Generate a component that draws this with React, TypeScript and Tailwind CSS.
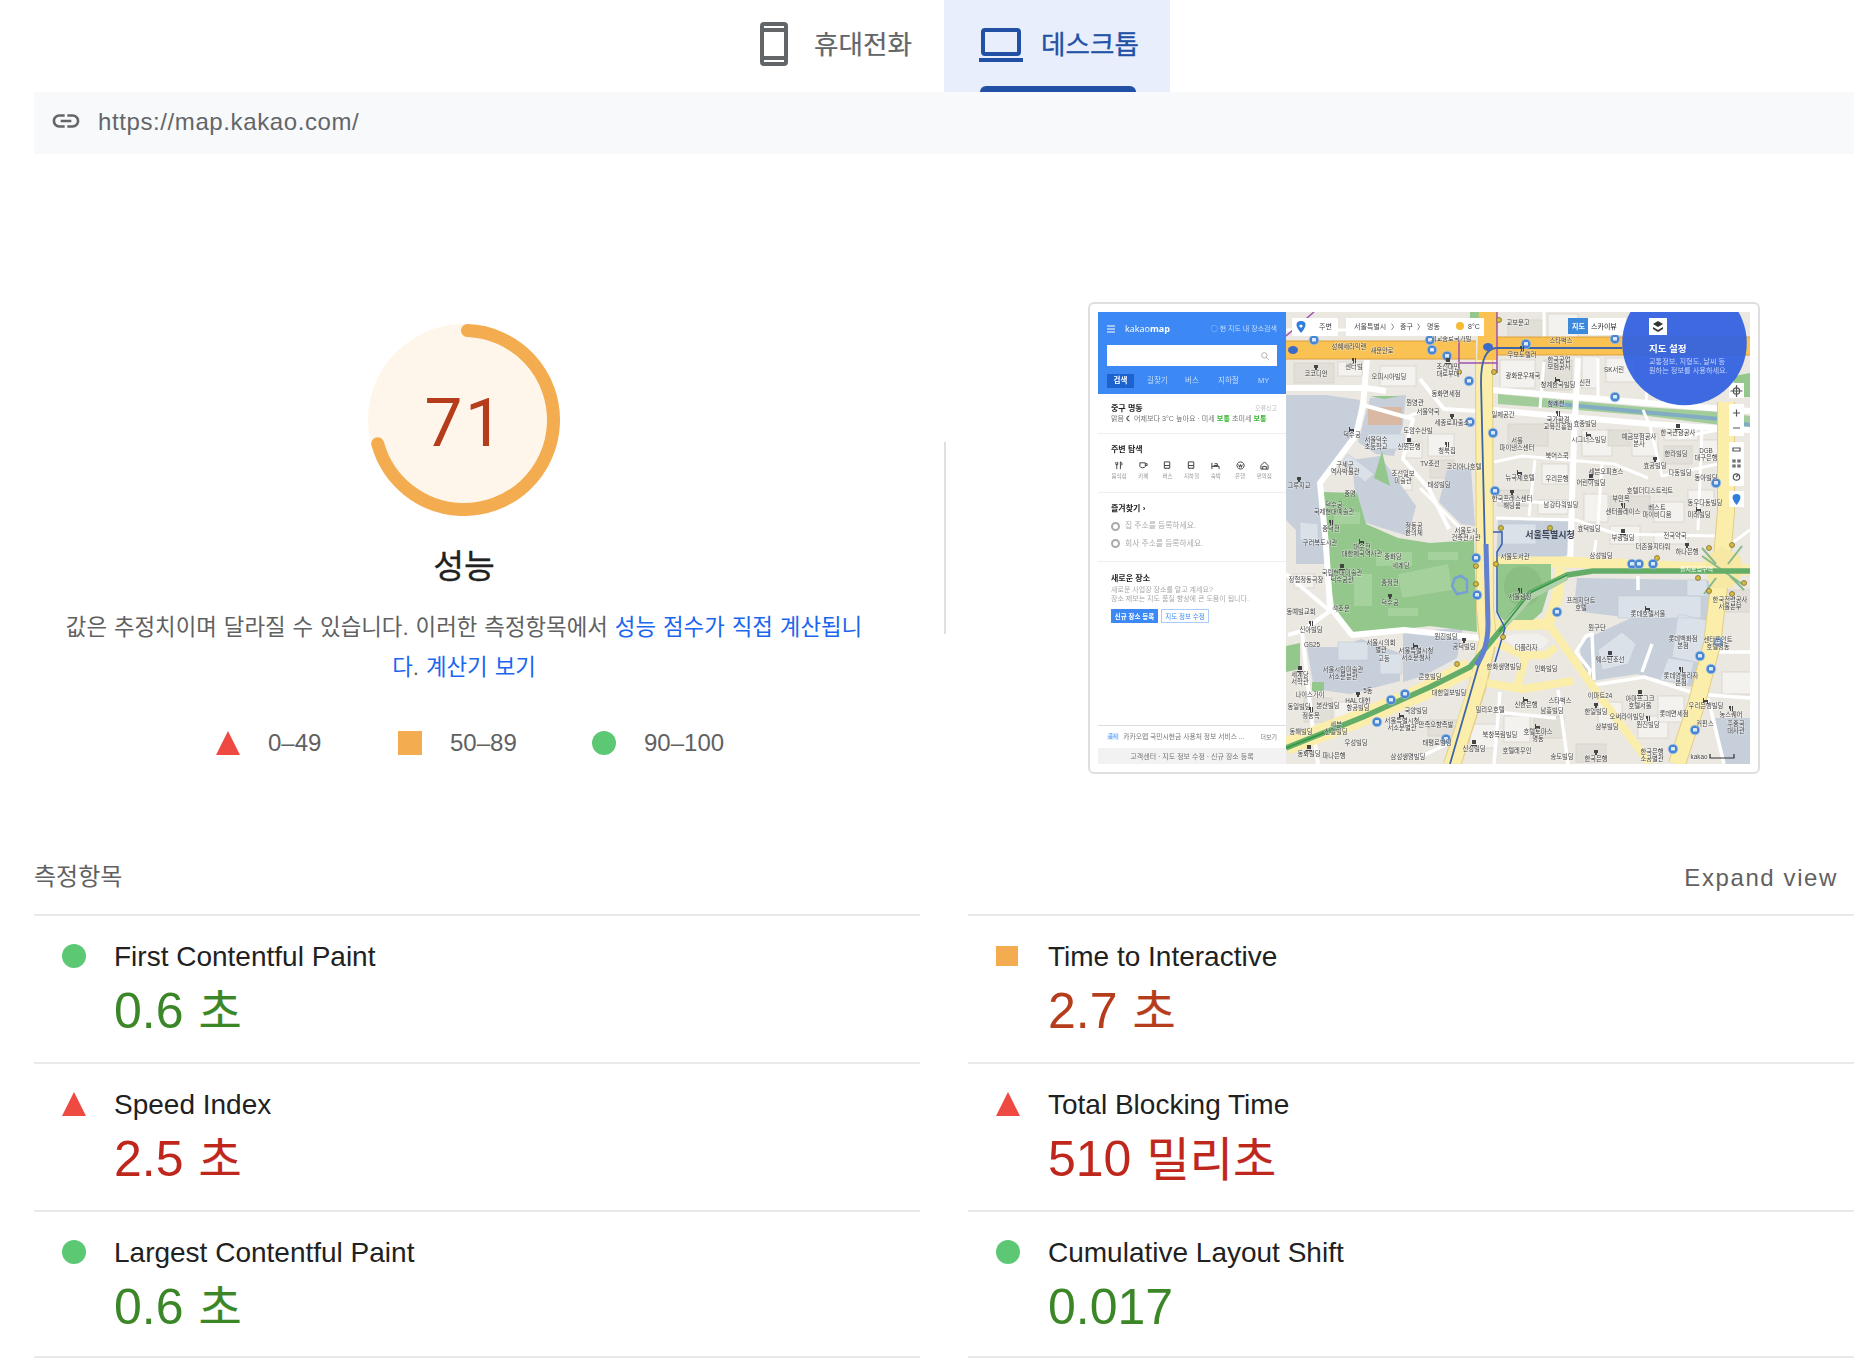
import React from "react";

type Level = "good" | "average" | "poor";

function Marker({ level, small }: { level: Level; small?: boolean }) {
  if (level === "good") return <span className="block size-6 rounded-full bg-[#5cc873]" />;
  if (level === "average")
    return <span className={small ? "block h-5 w-[22px] bg-[#f4ac50]" : "block size-6 bg-[#f4ac50]"} />;
  return (
    <svg className="block size-6" viewBox="0 0 24 24">
      <path d="M12 0 24 24H0Z" fill="#ef4a41" />
    </svg>
  );
}

function Tabs() {
  return (
    <nav className="flex h-[92px] pl-[724px] text-[26.6px] leading-none">
      <div className="flex w-[220px] items-center pl-9 pb-1 text-[#636669]">
        <svg className="h-11 w-7 shrink-0" viewBox="0 0 28 44" fill="currentColor">
          <path
            fillRule="evenodd"
            d="M4 0H24a4 4 0 0 1 4 4V40a4 4 0 0 1-4 4H4a4 4 0 0 1-4-4V4a4 4 0 0 1 4-4ZM4 4V6H24V4ZM4 10V34H24V10ZM4 38V40H24V38Z"
          />
        </svg>
        <span className="ml-[26px] mt-0.5 whitespace-nowrap [-webkit-text-stroke:0.2px]">휴대전화</span>
      </div>
      <div className="relative flex w-[226px] items-center bg-[#e8eefc] pl-[35px] pb-1 text-[#2150a4]">
        <svg className="mt-0.5 h-[34px] w-11 shrink-0" viewBox="0 0 44 34" fill="currentColor">
          <path
            fillRule="evenodd"
            d="M6 0H38a4 4 0 0 1 4 4V24a4 4 0 0 1-4 4H6a4 4 0 0 1-4-4V4a4 4 0 0 1 4-4ZM6 4V24H38V4ZM0 30H44V34H0Z"
          />
        </svg>
        <span className="ml-[18px] mt-0.5 whitespace-nowrap [-webkit-text-stroke:0.3px]">데스크톱</span>
        <span className="absolute bottom-0 left-9 h-1.5 w-[156px] rounded-t-md bg-[#2150a4]" />
      </div>
    </nav>
  );
}

function Gauge() {
  const r = 89.5;
  const len = 2 * Math.PI * r;
  return (
    <div className="relative mx-auto grid size-48 place-items-center">
      <svg className="absolute inset-0 size-48" viewBox="0 0 192 192">
        <circle cx="96" cy="96" r="96" fill="#fef6eb" />
        <circle
          cx="96"
          cy="96"
          r={r}
          fill="none"
          stroke="#f4ac50"
          strokeWidth="13"
          strokeLinecap="round"
          strokeDasharray={`${len * 0.7} ${len}`}
          transform="rotate(-87.8 96 96)"
        />
      </svg>
      <span className="relative left-px top-[3px] font-['Roboto'] text-[67.5px] leading-none tracking-[2.6px] text-[#b63d1c]">
        71
      </span>
    </div>
  );
}

function Score() {
  return (
    <section className="w-[860px] pt-[170px] text-center">
      <Gauge />
      <h2 className="mt-[31px] text-[33.5px] leading-[40px] text-[#212121] [-webkit-text-stroke:0.3px]">성능</h2>
      <p className="mt-[21px] whitespace-nowrap text-[22.4px] leading-[40px] text-[#616161] [word-spacing:0.7px]">
        값은 추정치이며 달라질 수 있습니다. 이러한 측정항목에서 <a className="text-[#1a66f0]">성능 점수가 직접 계산됩니</a>
        <br />
        <a className="text-[#1a66f0]">다</a>. <a className="text-[#1a66f0]">계산기 보기</a>
      </p>
      <div className="mt-[35px] flex h-10 items-center pl-[182px] text-2xl leading-none text-[#616161]">
        <Marker level="poor" />
        <span className="ml-7 w-[130px] text-left">0–49</span>
        <Marker level="average" />
        <span className="ml-7 w-[142px] text-left">50–89</span>
        <Marker level="good" />
        <span className="ml-7">90–100</span>
      </div>
    </section>
  );
}

const categories = [
  ["음식점", "M1 1v3M3 1v3M1 4h2M2 4v5M6 1v8M6 1c3 1 2 4 0 4"],
  ["카페", "M1 2h6v4c0 2-6 2-6 0ZM7 3h2v2H7"],
  ["버스", "M1.500 1h6v7h-6ZM1.500 5h6M3 8v1M6 8v1"],
  ["지하철", "M1.500 1h6v7h-6ZM1.500 5h6M2 9l1-1M7 9 6 8"],
  ["숙박", "M1 2v7M1 6h8v3M3 5h5M4 3h3v2"],
  ["은행", "M5 1a4 4 0 1 0 .1 0M3 4l1 3 1-3 1 3 1-3"],
  ["편의점", "M1 5l4-4 4 4v4H1ZM3 9V6h4v3"],
];

function MapSidebar() {
  return (
    <div className="flex h-full w-[188px] shrink-0 flex-col bg-white text-[7px] leading-none whitespace-nowrap text-[#777]">
      <div className="h-[82px] bg-[#3c88f4] px-[9px] text-white">
        <div className="flex h-[33px] items-center">
          <svg className="size-2" viewBox="0 0 8 8" stroke="#fff" strokeWidth="1.2">
            <path d="M0 1h8M0 4h8M0 7h8" />
          </svg>
          <span className="ml-[10px] font-['Open_Sans'] text-[9px]">
            kakao<b>map</b>
          </span>
          <span className="ml-auto text-[#c8defd]">◯ 현 지도 내 장소검색</span>
        </div>
        <div className="flex h-[21px] items-center justify-end bg-white pr-2">
          <svg className="size-2" viewBox="0 0 8 8" fill="none" stroke="#b5b5b5">
            <circle cx="3.300" cy="3.300" r="2.700" />
            <path d="m5 5 3 3" />
          </svg>
        </div>
        <div className="mt-2 flex h-[14px] items-center text-[7.5px] text-[#c8defd]">
          <b className="flex h-[14px] w-[27px] items-center justify-center bg-[#1d63d0] text-white">검색</b>
          <span className="ml-[13px] w-[38px]">길찾기</span>
          <span className="w-[33px]">버스</span>
          <span className="w-10">지하철</span>
          <span>MY</span>
        </div>
      </div>
      <div className="h-10 border-b border-[#eee] px-[13px] pt-[11px]">
        <div className="flex justify-between">
          <b className="text-[8px] text-[#222]">중구 명동</b>
          <span className="-mr-1 text-[6px] text-[#bbb]">오류신고</span>
        </div>
        <div className="mt-[3px] text-[7.1px]">
          맑음 <b className="text-[#222]">☾</b> 어제보다 3°C 높아요 · 미세 <b className="text-[#35b52f]">보통</b> 초미세{" "}
          <b className="text-[#35b52f]">보통</b>
        </div>
      </div>
      <div className="h-[59px] border-b border-[#eee] pt-[12px]">
        <b className="ml-[13px] text-[8px] text-[#222]">주변 탐색</b>
        <div className="ml-[9px] mt-[7px] flex">
          {categories.map(([name, d]) => (
            <div key={name} className="flex w-[24.200px] flex-col items-center gap-1 text-[5.5px] text-[#999]">
              <svg className="size-[9px]" viewBox="0 0 10 10" fill="none" stroke="#444" strokeWidth="1.1">
                <path d={d} />
              </svg>
              {name}
            </div>
          ))}
        </div>
      </div>
      <div className="h-[69px] border-b border-[#eee] px-[13px] pt-[12px] text-[#aaa]">
        <b className="text-[8px] text-[#222]">즐겨찾기 ›</b>
        {["집 주소를 등록하세요.", "회사 주소를 등록하세요."].map((t) => (
          <div key={t} className="mt-[8.5px] flex h-[9px] items-center gap-[5px] text-[7.8px]">
            <span className="size-[9px] rounded-full border-2 border-[#aaa]" />
            {t}
          </div>
        ))}
      </div>
      <div className="px-[13px] pt-[12px] leading-[9px] text-[#aaa]">
        <b className="text-[8px] text-[#222]">새로운 장소</b>
        <p className="mt-[2px]">새로운 사업장 장소를 알고 계세요?</p>
        <p>장소 제보는 지도 품질 향상에 큰 도움이 됩니다.</p>
        <div className="mt-[6px] flex gap-[3px] text-[6.5px]">
          <b className="flex h-[14px] w-[47px] items-center justify-center bg-[#3c88f4] text-white">신규 장소 등록</b>
          <span className="flex h-[14px] w-[48px] items-center justify-center border border-[#a9cdf8] text-[#3c88f4]">
            지도 정보 수정
          </span>
        </div>
      </div>
      <div className="mt-auto flex h-[23px] items-center border-t border-[#ddd] px-[9px]">
        <span className="bg-[#dceeff] px-px text-[5.500px] text-[#3c88f4]">공지</span>
        <span className="ml-[4px] text-[6.800px]">카카오맵 국민시현금 사용처 정보 서비스 ...</span>
        <span className="ml-auto text-[6px]">더보기</span>
      </div>
      <div className="flex h-4 items-center justify-center bg-[#f2f2f2]">고객센터 · 지도 정보 수정 · 신규 장소 등록</div>
    </div>
  );
}

type Label = [number, number, string, string?];
const labels: Label[] = [
  [218, 62, "코코디언"], [251, 35, "성혜세라믹랜"], [284, 39, "새문안로"], [256, 55, "센터빌"], [291, 65, "오피시아빌딩"],
  [317, 91, "원영관"], [254, 123, "덕수궁"], [278, 128, "서울덕수", "초등학교"], [320, 119, "도암수산빌"], [311, 135, "신원은행"],
  [247, 153, "구세군", "역사박물관"], [305, 162, "조선일보", "미술관"], [201, 174, "그루지교"], [252, 182, "중명"],
  [236, 193, "덕수궁", "국제현대예술관"], [233, 217, "중덕전"], [316, 214, "정동공", "한의체"], [222, 231, "구러복도시관"],
  [264, 235, "대수전", "대한제국역사관"], [295, 245, "중화당"], [303, 254, "세계당"], [244, 261, "국립현대미술관", "덕수궁관"],
  [208, 268, "정협정동극장"], [292, 271, "중정전"], [292, 291, "덕수궁"], [243, 297, "석조문"], [203, 300, "동예빌교회"],
  [213, 318, "신아빌딩"], [214, 333, "GS25"], [283, 331, "서울시의회", "별관"], [318, 339, "서울특별시청", "서소문청사"],
  [245, 358, "서울시립미술관", "서소문분관"], [286, 347, "고등"], [202, 363, "세계당", "서학관"], [212, 383, "나이스가이"],
  [270, 379, "5동"], [260, 389, "HAL 대한", "항공빌딩"], [230, 394, "본산빌딩"], [201, 395, "동일빌딩"], [213, 404, "정동옥"],
  [238, 413, "세븐", "신일빌딩"], [318, 399, "국양빌딩"], [304, 409, "서울특별시청", "서소문별관"], [258, 431, "우성빌딩"],
  [203, 420, "동해빌딩"], [211, 442, "동화빌딩"], [236, 444, "파나은행"], [310, 445, "삼성생명빌딩"],
  [353, 27, "외교종로국가빌"], [420, 11, "교보문고"], [463, 29, "스타벅스"], [424, 43, "무보도텔러"], [461, 48, "한국공업", "보험공사"],
  [425, 64, "광화문우체국"], [460, 73, "청계한국빌딩"], [487, 71, "신전"], [516, 58, "SK서린"], [350, 55, "조선대민", "대로부대"],
  [348, 82, "동화면세점"], [330, 100, "서울약국"], [354, 111, "세종로파출소"], [405, 103, "일제공간"], [458, 92, "청계천"],
  [460, 108, "국가환경", "교육진흥원"], [487, 112, "효종빌딩"], [419, 129, "서울", "파이낸스센터"], [491, 128, "시그너스빌딩"],
  [459, 144, "북어스쿡"], [541, 125, "예금보험공사", "본사"], [580, 121, "한국관광공사"], [578, 142, "한라빌딩"],
  [608, 139, "DGB", "대구은행"], [557, 154, "효공빌딩"], [582, 161, "다동빌딩"], [608, 166, "동아빌딩"],
  [349, 139, "청북집"], [332, 152, "TV조선"], [366, 155, "코리아나호텔"], [422, 166, "뉴국제호텔"], [459, 167, "우리은행"],
  [508, 160, "세븐오피흐스"], [493, 171, "어린이빌딩"], [552, 179, "호텔더디스트릭트"], [341, 173, "태성빌딩"],
  [414, 187, "한국프레스센터", "해딩룸"], [463, 193, "남강타워빌딩"], [523, 187, "부민옥"], [525, 200, "센터플레이스"],
  [559, 196, "베스트", "마이비디움"], [607, 191, "동우다동빌딩"], [601, 203, "미래빌딩"], [368, 219, "서울도시", "건축전시관"],
  [491, 217, "효덕빌딩"], [525, 226, "부광빌딩"], [577, 224, "전국약국"], [555, 235, "더존을지타워"], [589, 240, "하나은행"],
  [417, 245, "서울도서관"], [503, 244, "삼성빌딩"], [422, 285, "서울광장"], [483, 289, "프레지던트", "호텔"], [499, 316, "원구단"],
  [550, 302, "롯데호텔서울"], [585, 327, "롯데백화점", "본점"], [620, 328, "센터포인트", "호텔명동"], [512, 348, "웨스틴조선"],
  [428, 336, "더플라자"], [348, 325, "원진빌딩"], [366, 335, "공덕빌딩"], [406, 355, "한화생명빌딩"], [448, 357, "인화빌딩"],
  [583, 364, "롯데영플라자", "본점"], [332, 365, "콘호빌딩"], [351, 381, "대한일보빌딩"], [428, 393, "신한은행"], [462, 389, "스타벅스"],
  [502, 384, "이마트24"], [542, 387, "아마프그크", "호텔서울"], [392, 398, "밀리오호텔"], [454, 399, "남흥빌딩"], [498, 400, "한일빌딩"],
  [529, 405, "오써라이빌딩"], [576, 402, "롯데면세점"], [550, 413, "원진빌딩"], [509, 415, "삼부빌딩"], [402, 423, "북창목림빌딩"],
  [440, 420, "호텔토마스", "명동"], [338, 413, "만족오향족발"], [339, 431, "태평로빌딩"], [376, 437, "신성빌딩"], [419, 439, "호텔레우인"],
  [554, 440, "한국은행", "소공별관"], [498, 447, "한국은행"], [464, 445, "송도빌딩"], [632, 288, "한국전력공사", "서울본부"],
  [633, 403, "농스퀘어"], [638, 412, "주중국", "대사관"], [607, 412, "커핀스"], [608, 394, "우리은행빌딩"], [601, 445, "kakao"],
];

const stops = [
  [216, 28], [332, 28], [334, 38], [349, 44], [428, 32], [517, 27], [371, 69], [517, 85], [372, 110], [395, 121],
  [397, 179], [618, 171], [378, 246], [379, 283], [459, 300], [534, 252], [541, 252], [555, 252], [293, 388], [307, 382],
  [279, 410], [348, 427], [602, 344], [613, 357], [597, 418], [575, 437], [620, 330],
];

const blocks = [
  [196, 51, 40, 20], [240, 50, 24, 14], [282, 54, 36, 20], [410, 8, 34, 18], [450, 2, 30, 24], [402, 48, 35, 28],
  [446, 48, 28, 30], [484, 44, 16, 32], [508, 46, 30, 24], [410, 112, 40, 22], [444, 152, 26, 20], [484, 118, 30, 26],
  [510, 118, 22, 16], [534, 122, 26, 22], [566, 112, 34, 16], [566, 134, 28, 18], [604, 128, 16, 22], [486, 182, 24, 28],
  [512, 184, 40, 16], [556, 190, 30, 20], [590, 178, 26, 16], [400, 178, 34, 16], [440, 188, 30, 14], [330, 122, 26, 22],
  [332, 148, 24, 18], [308, 130, 16, 16], [292, 158, 22, 20], [206, 386, 28, 24], [236, 390, 22, 18], [196, 262, 20, 14],
  [330, 408, 34, 16], [372, 412, 26, 24], [406, 404, 26, 26], [436, 404, 30, 22], [500, 390, 24, 22], [540, 404, 30, 22],
  [478, 432, 30, 18], [560, 384, 26, 26], [624, 360, 30, 22], [628, 278, 26, 22], [512, 214, 30, 18], [556, 220, 34, 12],
];

const gates = [
  [401, 8], [396, 60], [403, 216], [452, 216], [398, 252], [405, 325], [359, 352], [559, 246], [378, 254], [378, 272],
  [611, 236], [634, 233], [646, 271], [611, 279], [634, 282], [361, 60], [600, 266],
];

const glyphs = [
  "M-2-9h4v3h-1v2h-2v-2h-1Z",
  "M-2-9v2q0 1 1 1v2h1v-5M1-9v5h1v-5Z",
  "M-3-8h1v2h4v3h-1v-1h-3v1h-1Z",
  "M-2-9h4v4h-4ZM-3-4h6v1h-6Z",
];

function CityMap() {
  const white = { fill: "none", stroke: "#fff", strokeLinejoin: "round" as const };
  return (
    <svg className="block h-full w-[464px] shrink-0" viewBox="188 0 464 452">
      <rect x="188" width="464" height="452" fill="#ebe7e1" />
      {blocks.map(([x, y, w, h], i) => (
        <rect key={i} x={x} y={y} width={w} height={h} fill={i % 3 ? "#f4f2ee" : "#e2dfd8"} stroke="#d3d0c9" strokeWidth=".7" />
      ))}
      <g fill="#c6cfda">
        <path d="M188 83h40l34 5-4 32-36 50 3 63 2 19h-29v-34l-10-10Z" />
        <path d="m272 86 36-3-3 30-9 31-18-2-18-12ZM254 148l28-4 36 50-8 30-45-14-8-28ZM209 335h34l20-8 39 14v28l-50 13-36-5ZM305 320l60-4-6 30-34 18-20 6ZM349 158l24-2 4 58-14-2-22-22ZM400 208l70 1v34l-26 8h-46Z" />
        <path d="m479 266 130 2 14 8-24 100-60-14-52 8-6-40 52-24-48-6-8-14ZM617 406h35v46h-26Z" />
      </g>
      <g fill="#dae1e9" stroke="#c1cad5" strokeWidth=".6">
        <path d="M250 142l26 20-9 8-23-20ZM270 122h36v15h-34ZM252 100l18-6M520 284h83v22h-83ZM589 268h20v16h-20ZM580 302l32 7-10 42-28-6ZM500 338l24-18 14 12-8 20-26 6ZM202 210l18 2v18l-18-2ZM240 330h30v18h-30ZM282 342h22v20h-22ZM404 212h34v20h-34ZM570 346l26 4-6 22-28-4Z" />
      </g>
      <path d="M270 95h34v18h-34Z" fill="#d9b9a4" />
      <g fill="#94c78b">
        <path d="m225 180 34 1 9 31 32 14 32 5 44-3 3 92-47-6-77 9-19-29-8-61ZM284 139l8 35-16-8ZM188 334l14-3v26l-14 3ZM214 370h12v9h-12ZM272 84h30l-16 3ZM636 64l16-3v24h-16ZM372 0h10v10h-10Z" />
      </g>
      <g fill="#a9d3a0" opacity=".8">
        <path d="M236 200h26v12h-26ZM278 240h36v14h-36ZM256 262h18v32h-18ZM300 262l50-10 4 26-50 8ZM290 296h30v8h-30ZM330 240h30v8h-30Z" />
      </g>
      <path d="m357 266 6-2 6 4v12l-10 2-5-8Z" fill="none" stroke="#769fd3" strokeWidth="2.500" />
      <path d="m400 82 55 5 90 8 77 5 30 4v12l-30-3-80-10-87-7-55-4Z" fill="#a2cd9a" />
      <path d="m450 91 95 9 76 7 31 6" fill="none" stroke="#82abc4" strokeWidth="4" />

      <g {...white} strokeWidth="6">
        <path d="m269 48-4 45-7 30-36 48 6 62 4 62 22 28 52-5 76 8M188 76h80l20 3M480 46l-4 80-4 126M394 78l156 13 102 8M394 98l158 14 100 6" />
        <path d="m322 67 24 30 34 2M188 262l38 32 6 5-28 20-14 4M204 320l10 90 6 42M265 93l50 14-10 40 26 30 20 40" strokeWidth="4" />
        <path d="m545 98 7 16 12 50 56-12M396 150l28-6 92 8 34 14M398 206l80 2 40 14 102 2M500 46v42M446 50l-4 46M550 60l-2 32M620 118l-40 8M437 148l-6 56M500 212l4-60M396 188l80 4M604 118l-4 100M446 0v26M188 18h188M322 100l-16 6M322 176l44 44M652 218l-30 22M498 228l-4 30" strokeWidth="3" />
        <path d="m490 370 2-12-14-18 10-16 6-2 2 46M496 373l50-8 56 18M544 360l10-28M598 382l54 4M610 386l16 66M402 380l-6 72M460 378l10 74M398 400l60 6M320 446l50-24M540 264v14M654 340h-34" strokeWidth="3.500" />
      </g>

      <path d="m386 48 1 250 3 30-10 45-26 80M628 90v110l-5 58-9 74-15 58-20 62" fill="none" stroke="#e3cd85" strokeWidth="18" />
      <g fill="none" stroke="#fbeeab" strokeLinejoin="round">
        <path d="m386 46 1 250 3 30-10 45-26 82M628 90v110l-5 58-9 74-15 58-20 62" strokeWidth="16" />
        <path d="M188 434l72-27 62-26 50-26" strokeWidth="18" />
        <path d="M396 250h70l186 8M463 256l-4 30-9 26-52 1" strokeWidth="11" />
        <path d="m452 314 43 61 57 77M389 371l36 6 50-8M394 329l30 14h24l10-8M428 343l-9 32" strokeWidth="8" />
      </g>
      <path d="M606 246l18-12 18 10 4 16-12 16h-22Z" fill="#f7e8a4" />
      <path d="m604 236 14 16M644 234l-14 18M606 282l12-16M646 278l-14-14M604 244l40 28" stroke="#87b98e" strokeWidth="2" />
      <path d="M400 252h53v18l-9 30-9 8h-30l-6-8Z" fill="#94c78b" />
      <ellipse cx="425" cy="274" rx="19" ry="20" fill="#86b87d" opacity=".6" />
      <path d="M403 325l14-3h24l10 6-6 8h-28Z" fill="#f2f0ed" />

      <path d="M188 38h190M396 34h256" stroke="#dd9f3c" strokeWidth="19" />
      <path d="M188 38h190M396 34h256" stroke="#f9c252" strokeWidth="17" />
      <path d="M381 0h18v48h-20Z" fill="#f9c252" />
      <path d="M399 0v51h-38M361 28v31M399 51v10M188 24l28-24" fill="none" stroke="#a151b0" strokeWidth="1.500" />
      <path d="M188 436l77-31 67-30 40-20 33-40 27-34 37-18 26-4h157" fill="none" stroke="#64ad69" strokeWidth="5.500" strokeLinejoin="round" />
      <path d="M405 315l27-30 37-20" fill="none" stroke="#b0d0aa" strokeWidth="6" />
      <path d="M401 320l31-39 37-18M188 436l50-20" fill="none" stroke="#319542" strokeWidth="1.500" />
      <path d="M524 36H398q-15 1-15 34l4 170 2 70q2 24-9 45l-28 97" fill="none" stroke="#4064a8" strokeWidth="1.800" />
      <path d="M388 232l2 80q0 26-12 41" fill="none" stroke="#637fd2" strokeWidth="5" />
      <path d="M395 220h9v12l-5 8v60l8 16-10 34" fill="none" stroke="#355db0" strokeWidth="1.500" />
      <g fill="#3b6bc9">
        <ellipse cx="390" cy="35" rx="5" ry="4" />
        <ellipse cx="195" cy="38" rx="5" ry="4" />
      </g>
      {gates.map(([x, y]) => (
        <circle key={`${x}-${y}`} cx={x} cy={y} r="2.500" fill="#d8ba3c" stroke="#6a6034" strokeWidth=".7" />
      ))}
      {stops.map(([x, y]) => (
        <g key={`${x}-${y}`}>
          <circle cx={x} cy={y} r="4.800" fill="#4785d2" stroke="#a8c6ea" strokeWidth=".7" />
          <rect x={x - 2} y={y - 2} width="4" height="3.500" rx=".5" fill="#dce9f8" />
        </g>
      ))}
      <g fontSize="6.300" textAnchor="middle" fill="#3f3f3f" stroke="#fff" strokeWidth="1" strokeOpacity=".5" style={{ paintOrder: "stroke" }}>
        {labels.map(([x, y, a, b]) => (
          <text key={`${x}-${y}`} x={x} y={y + 2}>
            {a}
            {b && (
              <tspan x={x} dy="6.500">
                {b}
              </tspan>
            )}
          </text>
        ))}
      </g>
      <g fill="#444">
        {labels.map(([x, y], i) =>
          i % 3 === 0 ? <path key={i} d={glyphs[(i / 3) % 4]} transform={`translate(${x} ${y})`} /> : null
        )}
      </g>
      <text x="452" y="226" fontSize="9" fontWeight="700" textAnchor="middle" fill="#3c4658">서울특별시청</text>
      <text x="582" y="259" fontSize="6" fill="#fff">을지로입구역</text>

      <path
        d="M194 6h46v18h-46ZM248 6h138v18H248ZM490 6h38v17h-38ZM631 71h15v15h-15ZM631 92h15v32h-15ZM631 130h15v44h-15ZM631 179h15v16h-15Z"
        fill="#fff"
      />
      <path d="M203 21c-7-8-5-12 0-12s7 4 0 12Z" fill="#2f7edb" />
      <circle cx="203" cy="14" r="1.600" fill="#fff" />
      <g fontSize="7" fill="#444">
        <text x="221" y="17">주변</text>
        <text x="256" y="17">서울특별시</text>
        <text x="293" y="17">〉</text>
        <text x="302" y="17">중구</text>
        <text x="319" y="17">〉</text>
        <text x="329" y="17">명동</text>
        <text x="370" y="17">8°C</text>
        <text x="493" y="17" fill="#222">스카이뷰</text>
      </g>
      <circle cx="362" cy="14" r="4" fill="#f6ba33" />
      <path d="M470 6h20v16h-20Z" fill="#3d89dc" />
      <text x="474" y="17" fontSize="7" fontWeight="700" fill="#fff">지도</text>
      <g fill="none" stroke="#555" strokeWidth="1.200">
        <circle cx="638.500" cy="79" r="3.200" />
        <path d="M638.500 73v12M632.500 79h12M635 101h7M638.500 97.500v7M635 116h7M635 136h7v3h-7ZM635 148h2v2h-2ZM640 148h2v2h-2ZM635 153h2v2h-2ZM640 153h2v2h-2Z" />
        <circle cx="638.500" cy="165" r="3.200" />
        <path d="m638 165 2-2" />
      </g>
      <path d="M638.500 193c-6-7-4.500-11 0-11s6 4 0 11Z" fill="#2f7edb" />
      <path d="M612 442v4h24v-4" fill="none" stroke="#333" strokeWidth="1.200" />

      <circle cx="586.500" cy="31" r="62.300" fill="#3262e0" fillOpacity=".94" />
      <path d="M551 6h18v17h-18Z" fill="#fff" />
      <path d="m555 12 5-3 5 3-5 3ZM555 15l5 3 5-3v2l-5 3-5-3Z" fill="#333" />
      <text x="551" y="40" fontSize="9.500" fontWeight="700" fill="#fff">지도 설정</text>
      <g fontSize="7.200" fill="#c4d3fa">
        <text x="551" y="52">교통정보, 지형도, 날씨 등</text>
        <text x="551" y="60.500">원하는 정보를 사용하세요.</text>
      </g>
    </svg>
  );
}

function Thumbnail() {
  return (
    <div className="ml-[142px] mt-[148px] h-[472px] w-[672px] rounded-md border-2 border-[#dfdfdf] p-2">
      <div className="flex h-[452px] w-[652px] overflow-hidden blur-[0.6px]">
        <MapSidebar />
        <CityMap />
      </div>
    </div>
  );
}

interface Metric {
  name: string;
  value: string;
  unit?: string;
  level: Level;
}

const columns: Metric[][] = [
  [
    { name: "First Contentful Paint", value: "0.6", unit: "초", level: "good" },
    { name: "Speed Index", value: "2.5", unit: "초", level: "poor" },
    { name: "Largest Contentful Paint", value: "0.6", unit: "초", level: "good" },
  ],
  [
    { name: "Time to Interactive", value: "2.7", unit: "초", level: "average" },
    { name: "Total Blocking Time", value: "510", unit: "밀리초", level: "poor" },
    { name: "Cumulative Layout Shift", value: "0.017", level: "good" },
  ],
];

const valueColor: Record<Level, string> = {
  good: "text-[#3b8626]",
  average: "text-[#b63d1c]",
  poor: "text-[#bf261c]",
};

function MetricRow({ name, value, unit, level }: Metric) {
  return (
    <div className="flex h-[148px] border-t-2 border-[#e9e9e9] pl-7 last:border-b-2">
      <div className="mt-7 flex h-6 w-[52px] items-center">
        <Marker level={level} small />
      </div>
      <div className="pt-[25px]">
        <div className="text-[28px] leading-8 text-[#212121]">{name}</div>
        <div className={`mt-2 flex h-[60px] items-baseline text-[50px] leading-[60px] ${valueColor[level]}`}>
          {value}
          {unit && (
            <span className="ml-[15px] text-[47px] leading-[50px] [-webkit-text-stroke:0.2px]">{unit}</span>
          )}
        </div>
      </div>
    </div>
  );
}

export default function App() {
  return (
    <main className="h-[1368px] w-[1868px] overflow-hidden bg-white font-['Liberation_Sans','Noto_Sans_CJK_KR',sans-serif]">
      <Tabs />
      <div className="ml-[34px] flex h-[62px] w-[1820px] items-center bg-[#f8f9fb] pl-4 text-[#636669]">
        <svg className="-mt-1 size-8" viewBox="0 0 24 24" fill="currentColor">
          <path d="M3.900 12c0-1.710 1.390-3.100 3.100-3.100h4V7H7c-2.760 0-5 2.240-5 5s2.240 5 5 5h4v-1.900H7c-1.710 0-3.100-1.390-3.100-3.100zM8 13h8v-2H8v2zm9-6h-4v1.900h4c1.710 0 3.100 1.390 3.100 3.100s-1.390 3.100-3.100 3.100h-4V17h4c2.760 0 5-2.240 5-5s-2.240-5-5-5z" />
        </svg>
        <span className="-mt-0.5 ml-4 text-2xl leading-none tracking-[0.6px]">https://map.kakao.com/</span>
      </div>
      <div className="flex h-[690px] pl-[34px]">
        <Score />
        <div className="ml-[50px] mt-[288px] h-48 w-0.5 bg-[#e0e0e0]" />
        <Thumbnail />
      </div>
      <div className="flex h-[70px] items-center justify-between pl-[34px] pr-[30px] text-2xl leading-none text-[#616161]">
        <span className="-mt-1">측정항목</span>
        <span className="-mt-0.5 tracking-[1.6px]">Expand view</span>
      </div>
      <div className="flex gap-12 pl-[34px]">
        {columns.map((col, i) => (
          <div key={i} className="w-[886px]">
            {col.map((m) => (
              <MetricRow key={m.name} {...m} />
            ))}
          </div>
        ))}
      </div>
    </main>
  );
}
